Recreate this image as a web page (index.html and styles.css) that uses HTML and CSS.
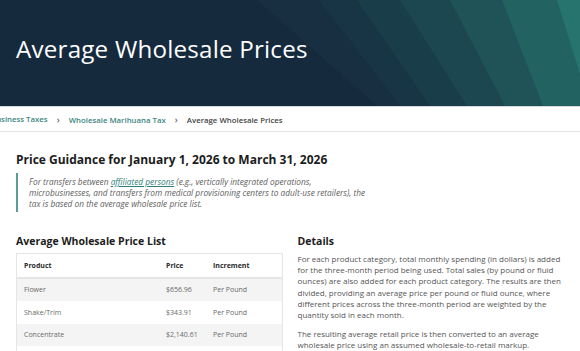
FILE: index.html
```html
<!DOCTYPE html>
<html lang="en">
<head>
    <meta charset="UTF-8">
    <meta name="viewport" content="width=device-width, initial-scale=1.0">
    <title>Average Wholesale Prices</title>
    <link rel="stylesheet" href="styles.css">
</head>
<body>
    <header class="banner">
        <svg class="banner-rays" viewBox="0 0 580 106" preserveAspectRatio="none" aria-hidden="true">
            <polygon points="257,0 600,0 600,106 377,106" fill="#172f41"/>
            <polygon points="319,0 600,0 600,106 400,106" fill="#183545"/>
            <polygon points="357,0 600,0 600,106 430,106" fill="#1a3d4a"/>
            <polygon points="400,0 600,0 600,106 467,106" fill="#1c4751"/>
            <polygon points="450,0 600,0 600,106 505,106" fill="#1f5358"/>
            <polygon points="502,0 600,0 600,106 543,106" fill="#226261"/>
            <polygon points="557,0 600,0 600,106 590,106" fill="#26746d"/>
        </svg>
        <h1 class="banner-title">Average Wholesale Prices</h1>
    </header>

    <nav class="breadcrumb">
        <ol>
            <li><a href="#">Business Taxes</a></li>
            <li><a href="#">Wholesale Marihuana Tax</a></li>
            <li class="current">Average Wholesale Prices</li>
        </ol>
    </nav>

    <main class="content">
        <h2 class="guidance">Price Guidance for January 1, 2026 to March 31, 2026</h2>
        <blockquote class="note">
            For transfers between <a href="#">affiliated persons</a> (e.g., vertically integrated operations,
            microbusinesses, and transfers from medical provisioning centers to adult-use retailers), the
            tax is based on the average wholesale price list.
        </blockquote>

        <div class="columns">
            <section>
                <h3>Average Wholesale Price List</h3>
                <table class="prices">
                    <thead>
                        <tr><th>Product</th><th>Price</th><th>Increment</th></tr>
                    </thead>
                    <tbody>
                        <tr><td>Flower</td><td>$656.96</td><td>Per Pound</td></tr>
                        <tr><td>Shake/Trim</td><td>$343.91</td><td>Per Pound</td></tr>
                        <tr><td>Concentrate</td><td>$2,140.61</td><td>Per Pound</td></tr>
                        <tr><td>Vape Cartridges</td><td>$4.32</td><td>Per Gram</td></tr>
                    </tbody>
                </table>
            </section>
            <section>
                <h3>Details</h3>
                <p>For each product category, total monthly spending (in dollars) is added for the three-month period being used. Total sales (by pound or fluid ounces) are also added for each product category. The results are then divided, providing an average price per pound or fluid ounce, where different prices across the three-month period are weighted by the quantity sold in each month.</p>
                <p>The resulting average retail price is then converted to an average wholesale price using an assumed wholesale-to-retail markup.</p>
            </section>
        </div>
    </main>
</body>
</html>
```

FILE: styles.css
```css
body {
    margin: 0;
    font-family: "Open Sans", "Liberation Sans", sans-serif;
    color: #4a4a4a;
    background: #fff;
}

.banner {
    position: relative;
    height: 106px;
    background: #162a3e;
    border-bottom: 1px solid #d5d9dc;
    overflow: hidden;
}

.banner-rays {
    position: absolute;
    top: 0;
    left: 0;
    width: 100%;
    height: 100%;
}

.banner-title {
    position: relative;
    margin: 0;
    padding: 32px 0 0 16px;
    font-size: 24.2px;
    font-weight: 400;
    letter-spacing: 0.2px;
    color: #fff;
}

.breadcrumb {
    border-bottom: 1px solid #e4e4e4;
    height: 24px;
    overflow: hidden;
}

.breadcrumb ol {
    list-style: none;
    margin: 0 0 0 -9px;
    padding: 0;
    display: flex;
    align-items: center;
    height: 24px;
    font-size: 7.8px;
    font-weight: 600;
    white-space: nowrap;
}

.breadcrumb li + li::before {
    content: "›";
    margin: 0 9px;
    color: #666;
    font-size: 9px;
}

.breadcrumb a {
    color: #3b8580;
    text-decoration: none;
}

.breadcrumb .current {
    color: #444;
}

.content {
    padding: 19px 16px 0;
}

.guidance {
    margin: 0;
    font-size: 12px;
    font-weight: 700;
    color: #1c1c1c;
}

.note {
    margin: 5px 0 0;
    padding: 3px 0 3px 11px;
    width: 345px;
    border-left: 2px solid #5a9c97;
    font-size: 8.3px;
    line-height: 11px;
    font-style: italic;
    color: #5e5e5e;
}

.note a {
    color: #2e7f79;
}

.columns {
    display: grid;
    grid-template-columns: 1fr 1fr;
    gap: 15px;
    margin-top: 22px;
}

.columns h3 {
    margin: 0 0 5px;
    font-size: 10.5px;
    font-weight: 700;
    color: #1c1c1c;
}

.prices {
    width: 100%;
    border-collapse: collapse;
    border: 1px solid #e6e6e6;
    font-size: 7px;
}

.prices th,
.prices td {
    text-align: left;
    padding: 0 7px;
    height: 22.5px;
}

.prices th {
    font-weight: 700;
    color: #2a2a2a;
    border-bottom: 2px solid #e6e6e6;
}

.prices th:first-child {
    width: 128px;
}

.prices th:nth-child(2) {
    width: 33px;
}

.prices td {
    color: #6a6a6a;
}

.prices tbody tr:nth-child(odd) {
    background: #f4f4f4;
}

.columns p {
    margin: 0 0 8px;
    font-size: 8px;
    line-height: 11.2px;
    color: #555;
}
```
